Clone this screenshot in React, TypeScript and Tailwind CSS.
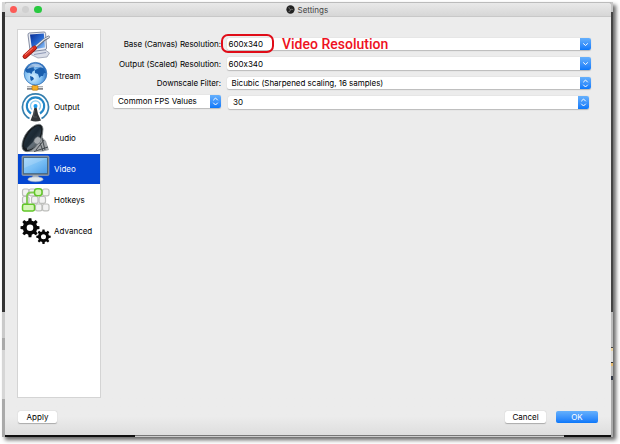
import type { ReactNode } from 'react';

function GeneralIcon() {
  return (
    <svg viewBox="0 0 30 30" className="h-[30px] w-[30px]">
      <defs>
        <linearGradient id="screen" x1="0" y1="0" x2="1" y2="1">
          <stop offset="0" stopColor="#062a94" />
          <stop offset="0.55" stopColor="#2a6cd4" />
          <stop offset="1" stopColor="#a6d2f8" />
        </linearGradient>
      </defs>
      <path d="M9 21 L23 19 L28.500 23 L26 27 L17 28 L9 24Z" fill="#d9dde8" stroke="#8b92a6" strokeWidth=".7" />
      <path d="M13 24.500 L25 22.500" stroke="#8e98b5" strokeWidth="1" />
      <path d="M8 3 L23 2 Q24.500 2 24.600 3.500 L25.500 18 Q25.500 19.500 24 19.800 L11 21.500 Q9.300 21.500 9 20 L7 5 Q7 3.300 8 3Z" fill="#e9ecf4" stroke="#68728c" strokeWidth=".8" />
      <path d="M9 4.500 L22.800 3.500 L24 17.500 L11 19.500Z" fill="url(#screen)" />
      <path d="M13.500 18 L23.500 9.500 L27.500 7" stroke="#6c7485" strokeWidth="2.700" strokeLinecap="round" />
      <path d="M13.500 17.500 L23 9.500 L27.500 7" stroke="#e6e9ee" strokeWidth="1.300" strokeLinecap="round" />
      <path d="M4 26.500 L13.500 18" stroke="#8e150d" strokeWidth="4.800" strokeLinecap="round" />
      <path d="M4 26.200 L13.500 17.700" stroke="#d92e20" strokeWidth="3.600" strokeLinecap="round" />
      <path d="M4.500 24.500 L11.500 18.300" stroke="#f28b7d" strokeWidth="1" strokeLinecap="round" />
    </svg>
  );
}

function StreamIcon() {
  return (
    <svg viewBox="0 0 30 30" className="h-[30px] w-[30px]">
      <defs>
        <radialGradient id="globe" cx=".4" cy=".65" r=".65">
          <stop offset="0" stopColor="#d8f0ff" />
          <stop offset=".55" stopColor="#82c0f2" />
          <stop offset="1" stopColor="#2267bd" />
        </radialGradient>
      </defs>
      <path d="M13 22H15V26H13Z" fill="#c29b3d" />
      <path d="M6 27H22" stroke="#83858a" strokeWidth="3.400" />
      <path d="M6 26.300H22" stroke="#e2e2e2" strokeWidth="1.300" />
      <rect x="11" y="24.500" width="6" height="4.700" rx="1" fill="#f5ae25" stroke="#ad6f0b" strokeWidth=".6" />
      <circle cx="14.500" cy="12.700" r="11.300" fill="url(#globe)" stroke="#3574b7" strokeWidth=".8" />
      <path d="M4 9 Q6 5 10 4 L14 5 L12.500 7 L14 9 L11.500 10.500 L10.500 13 L8 11.500 L7 12 L5 11Z M14 9 L17 7.500 L20 6 L23 8 L25 12 L23 12 L22 15 L20 15 L18.500 17 L17 13 L14 12Z M9 15 L12 16 L13 18 L10.500 20 L9.500 19Z" fill="#1a5fae" />
      <path d="M6 8 Q9 2.500 14.500 2.500 Q20 2.500 22.500 7 Q14 4.500 6 8Z" fill="#fff" opacity=".5" />
    </svg>
  );
}

function OutputIcon() {
  return (
    <svg viewBox="0 0 30 30" fill="none" className="h-[30px] w-[30px]">
      <path d="M8.500 26.500A13 13 0 1 1 20.500 26.500" stroke="#367fae" strokeWidth="1.700" />
      <path d="M10 21.500A8.700 8.700 0 1 1 19 21.500" stroke="#2487c7" strokeWidth="2.100" />
      <path d="M11 17.500A5 5 0 1 1 18 17.500" stroke="#8acdf0" strokeWidth="1.300" />
      <path d="M13.500 15H15.500L17 22L20 28.500Q14.500 30.500 9.500 28.500L12 22Z" fill="#333638" />
      <path d="M13.500 18L12.500 25L16 25" stroke="#666b6e" strokeWidth=".6" />
      <circle cx="14.500" cy="14" r="2" fill="#1d9fee" />
    </svg>
  );
}

function AudioIcon() {
  return (
    <svg viewBox="0 0 30 30" className="h-[30px] w-[30px]">
      <defs>
        <linearGradient id="cone" x1="0" y1="0" x2="1" y2="1">
          <stop stopColor="#2a3c4a" />
          <stop offset=".5" stopColor="#1b2832" />
          <stop offset="1" stopColor="#586773" />
        </linearGradient>
      </defs>
      <path d="M21 7L22 15L25 18L28 27L22 28.500L7 29Z" fill="#a1a5a8" />
      <path d="M21 15L24 27M23 17L15 27M27 24L13 28.500M19 20L22 28" stroke="#43494d" strokeWidth="1" />
      <path d="M18 1.200Q21.500 1.500 22 6Q22 15 14.500 24Q9 29.500 4.500 28.500Q0 27 1.200 20Q3 11 10 5Q14 1.200 18 1.200Z" fill="#171c20" stroke="#757d82" strokeWidth=".8" />
      <path d="M17 2.800Q20.500 3.500 20 9Q18.500 17 12 23Q7.500 27 4.500 25Q1.500 22.500 4.500 16Q10 5 17 2.800Z" fill="url(#cone)" />
      <path d="M6 25L14 17L18 20Q12 27 6 27Z" fill="#77838b" opacity=".7" />
      <ellipse cx="16.500" cy="17.500" rx="3.200" ry="3.900" transform="rotate(38 16.500 17.500)" fill="#a6abaf" stroke="#636b71" strokeWidth=".6" />
    </svg>
  );
}

function VideoIcon() {
  return (
    <svg viewBox="0 0 30 30" className="h-[30px] w-[30px]">
      <defs>
        <linearGradient id="display" x1="0" y1="0" x2="1" y2="1">
          <stop stopColor="#9fd3fa" />
          <stop offset=".5" stopColor="#79bff5" />
          <stop offset="1" stopColor="#4b9ce8" />
        </linearGradient>
      </defs>
      <path d="M12 20H17L18 25H11Z" fill="#a8b2bd" />
      <ellipse cx="14.500" cy="25.300" rx="7.700" ry="2.500" fill="#dfe7ed" stroke="#98a6b8" strokeWidth=".6" />
      <rect x="1" y="2" width="27" height="19.500" rx="1.200" fill="#727e89" stroke="#aab5bd" strokeWidth=".6" />
      <rect x="2.700" y="3.700" width="23.600" height="16" fill="url(#display)" stroke="#31536c" strokeWidth=".6" />
      <path d="M3.200 4.300H26L3.200 14Z" fill="#fff" opacity=".16" />
    </svg>
  );
}

const greyKeys = [
  [1.5, 4], [8, 4], [21.5, 4],
  [1.5, 11.5], [10.5, 11.5], [18, 11.5],
  [14.5, 19], [21.5, 19],
];

function HotkeysIcon() {
  return (
    <svg viewBox="0 0 30 30" fill="none" className="h-[30px] w-[30px]">
      {greyKeys.map(([x, y]) => (
        <rect key={`${x}-${y}`} x={x} y={y} width="6.500" height="6.800" rx="1.900" fill="#f2f2f2" stroke="#bdbebb" strokeWidth="1.200" />
      ))}
      <path d="M6 20V11.500Q6 7.500 10 7.500H15" stroke="#80ca52" strokeWidth="1.900" />
      <rect x="13.500" y="3.800" width="7.500" height="7" rx="2.700" fill="#d5f5b8" stroke="#62c629" strokeWidth="1.500" />
      <rect x="1.500" y="19.200" width="12" height="6.800" rx="1.700" fill="#d5f5b8" stroke="#62c629" strokeWidth="1.500" />
    </svg>
  );
}

function Gear({ cx, cy, scale }: { cx: number; cy: number; scale: number }) {
  return (
    <g transform={`translate(${cx} ${cy}) scale(${scale})`}>
      {[0, 45, 90, 135, 180, 225, 270, 315].map((angle) => (
        <path key={angle} d="M-1.900 -5L-1.300 -9H1.300L1.900 -5Z" fill="#070707" transform={`rotate(${angle})`} />
      ))}
      <circle r="5" fill="none" stroke="#070707" strokeWidth="3.700" />
    </g>
  );
}

function AdvancedIcon() {
  return (
    <svg viewBox="0 0 30 30" className="h-[30px] w-[30px] overflow-visible">
      <Gear cx={9} cy={11.7} scale={1.05} />
      <Gear cx={22.5} cy={20.7} scale={0.8} />
    </svg>
  );
}

const sections: { name: string; icon: ReactNode }[] = [
  { name: 'General', icon: <GeneralIcon /> },
  { name: 'Stream', icon: <StreamIcon /> },
  { name: 'Output', icon: <OutputIcon /> },
  { name: 'Audio', icon: <AudioIcon /> },
  { name: 'Video', icon: <VideoIcon /> },
  { name: 'Hotkeys', icon: <HotkeysIcon /> },
  { name: 'Advanced', icon: <AdvancedIcon /> },
];

function Arrows({ double = false }: { double?: boolean }) {
  return (
    <span className="flex h-full w-[11px] shrink-0 items-center justify-center rounded-r-[2px] bg-linear-to-b from-[#65b0fc] to-[#0878fa]">
      <svg viewBox="0 0 11 13" fill="none" stroke="white" strokeWidth="1" strokeLinecap="round" strokeLinejoin="round" className="h-[13px] w-[11px]">
        {double ? <path d="M3.500 5L5.500 3L7.500 5M3.500 8L5.500 10L7.500 8" /> : <path d="M3.500 5.700L5.500 7.500L7.500 5.700" />}
      </svg>
    </span>
  );
}

function Field({ children, double = false, className = '' }: { children: ReactNode; double?: boolean; className?: string }) {
  return (
    <div className={`flex h-[12.5px] items-center justify-between rounded-[2px] bg-white shadow-[0_0.5px_1px_#bbb] ${className}`}>
      <span>{children}</span>
      <Arrows double={double} />
    </div>
  );
}

function Label({ children }: { children: ReactNode }) {
  return <span className="w-[108px] text-right tracking-[-.06px] whitespace-nowrap">{children}</span>;
}

export default function App() {
  return (
    <div className="h-[444px] w-[620px] overflow-hidden bg-white pt-[2px] pl-[2px] font-['Inter','Liberation_Sans',sans-serif] text-[8px] leading-[10px] text-black [font-feature-settings:'calt'_0]">
      <div className="flex h-[435px] w-[611px] bg-[#bcbcbc] shadow-[3px_3px_4px_0px_#666]">
        <div className="flex w-[3px] shrink-0 flex-col">
          <span className="h-[10px] bg-[#d5d5d5]" />
          <span className="h-[300px] bg-[#343434]" />
          <span className="h-[26px] bg-[#cacaca]" />
          <span className="h-[12px] bg-[#aaa]" />
          <span className="h-[49px] bg-[#d6d6d6]" />
          <span className="flex-1 bg-[#aaa]" />
        </div>
        <div className="flex w-[606px] flex-col">
          <div className="h-px bg-[#bbb]" />
          <main className="flex h-[432px] flex-col overflow-hidden rounded-t-[3px] rounded-b-[2px] bg-[#ececec]">
            <header className="flex h-[14px] shrink-0 items-center border-b border-[#c8c8c8] bg-linear-to-b from-[#e9e9e9] to-[#d6d6d6] pl-[4.5px]">
              <div className="flex w-[60px] gap-[4.8px]">
                <span className="h-[7.500px] w-[7.500px] rounded-full bg-[#fc5b57]" />
                <span className="h-[7.500px] w-[7.500px] rounded-full bg-[#d0d0d0]" />
                <span className="h-[7.500px] w-[7.500px] rounded-full bg-[#28c940]" />
              </div>
              <div className="ml-[216px] flex items-center gap-[3px] text-[#444]">
                <svg viewBox="0 0 10 10" className="h-[9px] w-[9px]">
                  <circle cx="5" cy="5" r="4.600" fill="#222" />
                  <path d="M3.200 2.200Q3 4.500 5 5Q7 4 8 5.500M5 5Q5 7.500 2.700 7.500" fill="none" stroke="#999" strokeWidth=".65" />
                </svg>
                <h1 className="text-[8px]">Settings</h1>
              </div>
            </header>
            <section className="flex h-[381px] shrink-0 pt-[12px] pl-[12px]">
              <nav className="h-[369px] w-[84px] shrink-0 border border-[#d4d4d4] bg-white">
                {sections.map(({ name, icon }) => (
                  <div key={name} className={`flex h-[30.9px] items-center gap-[3px] pl-[3px] ${name === 'Video' ? 'bg-[#0447d2] text-white' : ''}`}>
                    {icon}
                    <span>{name}</span>
                  </div>
                ))}
              </nav>
              <div className="ml-[12px] flex flex-col gap-[6.500px] pt-[8.5px]">
                <div className="flex h-[13px] items-center">
                  <Label>Base (Canvas) Resolution:</Label>
                  <div className="relative ml-[5.5px]">
                    <Field className="w-[364.5px] pl-[2px]">600x340</Field>
                    <span className="absolute -top-[4px] -left-[6px] h-[19px] w-[53px] rounded-[7px] border-2 border-[#e00c18]" />
                    <strong className="absolute -top-[2px] left-[55.5px] font-['Roboto','Open_Sans',sans-serif] text-[14px] leading-[17px] font-medium whitespace-nowrap text-[#ee1122]">Video Resolution</strong>
                  </div>
                </div>
                <div className="flex h-[13px] items-center">
                  <Label>Output (Scaled) Resolution:</Label>
                  <Field className="ml-[5.5px] w-[364.5px] pl-[2px]">600x340</Field>
                </div>
                <div className="flex h-[13px] items-center">
                  <Label>Downscale Filter:</Label>
                  <Field double className="ml-[5.5px] w-[364.5px] pl-[5px] tracking-[-.03px]">Bicubic (Sharpened scaling, 16 samples)</Field>
                </div>
                <div className="flex h-[13px] items-start">
                  <Field double className="-mt-[1px] w-[108px] pl-[5px]">Common FPS Values</Field>
                  <Field double className="ml-[7px] w-[361px] pl-[5px]">30</Field>
                </div>
              </div>
            </section>
            <footer className="flex flex-1 items-start bg-linear-to-b from-[#ececec] from-50% to-[#dedede] pt-[13px] pr-[13px] pl-[13px]">
              <button className="h-[12px] w-[39px] rounded-[2px] bg-white shadow-[0_0.5px_1px_#aaa]">Apply</button>
              <button className="ml-auto h-[12px] w-[41px] rounded-[2px] bg-white shadow-[0_0.5px_1px_#aaa]">Cancel</button>
              <button className="ml-[10px] h-[12px] w-[42px] rounded-[2px] bg-linear-to-b from-[#65b0fc] to-[#0878fa] text-white">OK</button>
            </footer>
          </main>
          <div className="flex h-[2px]">
            <span className="w-[130px] bg-[#111]" />
            <span className="w-[429px] border-t border-[#777] bg-[#ccc]" />
            <span className="flex-1 bg-[#111]" />
          </div>
        </div>
        <div className="flex flex-1 flex-col">
          <span className="h-[10px] bg-[#c5c5c5]" />
          <span className="h-[300px] bg-[#444]" />
          <span className="h-[35px] bg-[#bbb]" />
          <span className="h-px bg-[#444]" />
          <span className="h-[3px] bg-[#ead3a1]" />
          <span className="h-[11px] bg-[#ddd]" />
          <span className="h-px bg-[#333]" />
          <span className="h-[3px] bg-[#e2b96f]" />
          <span className="h-[10px] bg-[#bbb]" />
          <span className="h-[4px] bg-[#343a48]" />
          <span className="flex-1 bg-[#aaa]" />
        </div>
      </div>
    </div>
  );
}
